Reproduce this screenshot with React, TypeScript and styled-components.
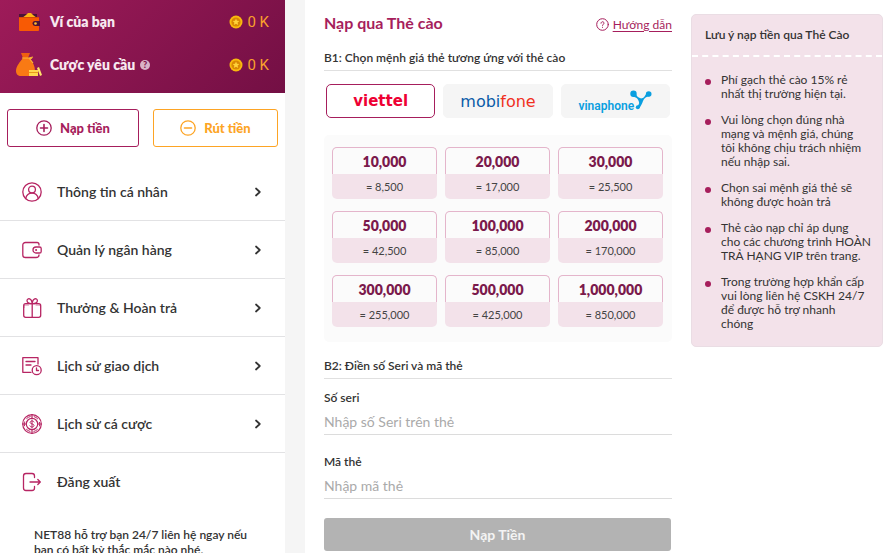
import React, { useState } from "react";
import styled, { createGlobalStyle, css } from "styled-components";

const GlobalStyle = createGlobalStyle`
  *, *::before, *::after { box-sizing: border-box; }
  body {
    margin: 0;
    background: #fff;
    color: #333;
    font-family: Lato, "Noto Sans", sans-serif;
    font-size: 14px;
  }
  button, input { font: inherit; color: inherit; }
  button { cursor: pointer; }
`;

const brand = "#a61e5c";

const Page = styled.div`
  display: grid;
  grid-template-columns: 285px minmax(0, 1fr);
  column-gap: 20px;
  height: 100vh;
  background: #f5f5f5;
`;

const pane = css`
  background: #fff;
  overflow-y: auto;
  scrollbar-width: none;
`;

const Sidebar = styled.aside`
  ${pane}
`;

const Balances = styled.section`
  display: grid;
  row-gap: 12px;
  padding: 6px 16px 13px;
  background: linear-gradient(135deg, #9e1b59, #730f44);
`;

const BalanceRow = styled.div`
  display: flex;
  align-items: center;
  height: 31px;
`;

const BalanceIcon = styled.span`
  display: flex;
  width: 34px;
`;

const BalanceName = styled.span`
  color: #f7e9f0;
  font-size: 14px;
  font-weight: 800;
`;

const HelpDot = styled.button`
  display: grid;
  place-items: center;
  width: 10px;
  height: 10px;
  margin-left: 5px;
  padding: 0;
  border: 0;
  border-radius: 50%;
  background: #d9b3c7;
  color: #7d1249;
  font-size: 9px;
  font-weight: 900;
  line-height: 10px;
`;

const Amount = styled.span`
  display: flex;
  align-items: center;
  gap: 4px;
  margin-left: auto;
  color: #f9a12c;
  font-family: Roboto, sans-serif;
  font-size: 15px;
`;

const Actions = styled.div`
  display: grid;
  grid-template-columns: 132fr 125fr;
  column-gap: 14px;
  padding: 16px 7px;
`;

const ActionButton = styled.button<{ $color: string }>`
  display: flex;
  align-items: center;
  justify-content: center;
  gap: 8px;
  height: 38px;
  padding: 0;
  border: 1px solid ${(p) => p.$color};
  border-radius: 3px;
  background: #fff;
  color: ${(p) => p.$color};
  font-size: 13px;
  font-weight: 900;
`;

const MenuList = styled.ul`
  margin: 0;
  padding: 0;
  list-style: none;
`;

const MenuItem = styled.li`
  border-bottom: 1px solid #e2e2e4;
  &:last-child { border-bottom: 0; }
`;

const MenuLink = styled.a`
  display: flex;
  align-items: center;
  height: 57px;
  padding: 0 24px 0 22px;
  color: #333;
  font-size: 14px;
  font-weight: 600;
  text-decoration: none;
`;

const MenuIcon = styled.span`
  display: flex;
  width: 35px;
  color: #b72563;
`;

const MenuChevron = styled.span`
  display: flex;
  margin-left: auto;
`;

const Support = styled.p`
  margin: 0;
  padding: 17px 34px;
  font-size: 12px;
  font-weight: 600;
  line-height: 15px;
`;

const Main = styled.main`
  ${pane}
  display: grid;
  grid-template-columns: minmax(0, 1fr) 192px;
  align-items: start;
  column-gap: 19px;
  padding: 14px 6px 2px 19px;
`;

const Deposit = styled.form`
  display: flex;
  flex-direction: column;
`;

const TitleRow = styled.header`
  display: flex;
  align-items: center;
  justify-content: space-between;
  height: 20px;
`;

const Title = styled.h1`
  margin: 0;
  color: ${brand};
  font-size: 16px;
  font-weight: 700;
  line-height: 18px;
  align-self: flex-start;
`;

const Guide = styled.a`
  display: flex;
  align-items: center;
  gap: 4px;
  color: ${brand};
  font-size: 12px;
  text-decoration: none;
  span { text-decoration: underline; text-underline-offset: 2px; }
`;

const Step = styled.h2`
  margin: 0;
  padding-bottom: 4px;
  border-bottom: 1px solid #e0e0e0;
  font-size: 12px;
  font-weight: 600;
  line-height: 16px;
`;

const StepOne = styled(Step)`
  margin-top: 16px;
`;

const Providers = styled.div`
  display: grid;
  grid-template-columns: repeat(3, 1fr);
  column-gap: 8px;
  padding: 13px 2px 17px;
`;

const Provider = styled.button<{ $active: boolean }>`
  display: flex;
  align-items: center;
  justify-content: center;
  height: 34px;
  padding: 0;
  border: 1px solid ${(p) => (p.$active ? brand : "#f5f5f5")};
  border-radius: 5px;
  background: ${(p) => (p.$active ? "#fff" : "#f5f5f5")};
`;

const Viettel = styled.span`
  color: #ee0033;
  font: 700 15px "DejaVu Sans", sans-serif;
`;

const Mobifone = styled.span`
  color: #0a5ca8;
  font: 400 16px "DejaVu Sans", sans-serif;
  em { color: #f0301f; font-style: normal; }
`;

const Vinaphone = styled.span`
  display: flex;
  align-items: flex-end;
  color: #0a9fe0;
  font: 600 12px Roboto, sans-serif;
  svg { margin: 0 0 3px -4px; }
`;

const CardGrid = styled.div`
  display: grid;
  grid-template-columns: repeat(3, 1fr);
  gap: 12px 8px;
  margin-bottom: 16px;
  padding: 12px 9px 15px 8px;
  border-radius: 5px;
  background: #fbfbfb;
`;

const Card = styled.button`
  display: flex;
  flex-direction: column;
  padding: 0;
  border: 0;
  border-radius: 5px;
  background: #f3e2ea;
  text-align: center;
`;

const CardValue = styled.span`
  width: 100%;
  height: 27px;
  border: 1px solid #e4b5cb;
  border-bottom: 0;
  border-radius: 5px 5px 0 0;
  background: #fbfbfb;
  color: #7b1a4c;
  font-size: 14px;
  font-weight: 800;
  line-height: 28px;
`;

const CardNet = styled.span`
  width: 100%;
  color: #444;
  font-size: 11px;
  line-height: 25px;
`;

const Field = styled.div`
  display: flex;
  flex-direction: column;
  margin-top: 11px;
  & + & { margin-top: 19px; }
`;

const Label = styled.label`
  font-size: 12px;
  font-weight: 600;
  line-height: 16px;
`;

const Input = styled.input`
  width: 100%;
  height: 29px;
  padding: 2px 0 0;
  border: 0;
  border-bottom: 1px solid #dcdcdc;
  background: transparent;
  font-size: 14px;
  outline: 0;
  &::placeholder { color: #aaa; opacity: 1; }
`;

const Submit = styled.button`
  height: 33px;
  margin: 19px 1px 0 0;
  border: 0;
  border-radius: 3px;
  background: #b3b3b3;
  color: #f4f4f4;
  font-size: 14px;
  font-weight: 700;
`;

const Notes = styled.section`
  border: 1px solid #eadde4;
  border-radius: 5px;
  background: #f3e2ea;
`;

const NotesTitle = styled.h2`
  margin: 0;
  padding: 0 13px;
  border-bottom: 2px dashed #fff;
  font-size: 12px;
  font-weight: 600;
  line-height: 40px;
`;

const NotesList = styled.ul`
  display: grid;
  row-gap: 12px;
  margin: 0;
  padding: 16px 10px 15px 29px;
  list-style: none;
  font-size: 12px;
  line-height: 14px;
`;

const Note = styled.li`
  position: relative;
  white-space: pre-line;
  &::before {
    content: "";
    position: absolute;
    top: 6px;
    left: -16px;
    width: 6px;
    height: 6px;
    border-radius: 50%;
    background: ${brand};
  }
`;

const line = {
  fill: "none",
  stroke: "currentColor",
  strokeWidth: 1.3,
  strokeLinecap: "round" as const,
  strokeLinejoin: "round" as const,
};

const WalletColor = () => (
  <svg width="26" height="20" viewBox="0 0 26 20" aria-hidden="true">
    <path d="M3 2h18v6H3z" fill="#4b1238" />
    <path d="M6 6l4-3 2-2h3l2 2 4 3z" fill="#fdb515" />
    <rect x="3" y="5" width="20" height="14" rx="1" fill="#f85a04" />
    <path d="M3 5h20v1H3z" fill="#d94b06" />
    <path d="M19 9h5v5h-5a2.5 2.5 0 0 1 0-5z" fill="#4b1238" />
    <circle cx="19.500" cy="11.500" r="1.300" fill="#fdc332" />
  </svg>
);

const MoneyBag = () => (
  <svg width="26" height="25" viewBox="0 0 26 25" aria-hidden="true">
    <path d="M5 1h9l-2 5H7z" fill="#ef5f10" />
    <path d="M7 6h6c4 4 6 8 6 13 0 4-2 5-5 5H5c-3 0-5-2-5-5C0 14 4 10 7 6z" fill="#f97a14" />
    <path d="M6 6h7l4-1M13 6l4 5M14 7l2-1" stroke="#fdb937" strokeWidth="1.200" fill="none" />
    <path d="M13 18h9v6h-9z" fill="#ffd84d" />
    <path d="M13 20.500h9" stroke="#e99b1a" />
    <path d="M21 16l2-1 3 8-2 1z" fill="#ffe36b" />
  </svg>
);

const Coin = () => (
  <svg width="14" height="14" viewBox="0 0 14 14" aria-hidden="true">
    <circle cx="7" cy="7" r="6.500" fill="#f9b90e" />
    <circle cx="7" cy="7" r="4.600" fill="#d98804" />
    <path d="M7 3.600l1 2.200 2.400.2-1.800 1.600.6 2.300L7 8.700 4.800 9.900l.6-2.300L3.600 6 6 5.800z" fill="#ffd23a" />
  </svg>
);

const SignCircle = ({ plus }: { plus?: boolean }) => (
  <svg width="16" height="16" viewBox="0 0 16 16" aria-hidden="true" {...line}>
    <circle cx="8" cy="8" r="7.200" />
    <path d={plus ? "M4.500 8h7M8 4.500v7" : "M4.500 8h7"} strokeWidth="1.600" />
  </svg>
);

const UserIcon = () => (
  <svg width="20" height="20" viewBox="0 0 20 20" aria-hidden="true" {...line}>
    <circle cx="10" cy="10" r="9.200" />
    <circle cx="10" cy="7.500" r="3.400" />
    <path d="M3.700 16.500c.7-3.200 3.200-5.300 6.300-5.300s5.600 2.100 6.300 5.300" />
  </svg>
);

const WalletIcon = () => (
  <svg width="20" height="20" viewBox="0 0 20 20" aria-hidden="true" {...line}>
    <path d="M17 5V4.500c0-1.200-.8-2-2-2H3.500c-1.600 0-2.700 1-2.700 2.600v9.800c0 1.600 1 2.600 2.700 2.600H14c1.800 0 3-.9 3-2.500" />
    <path d="M14 7h3.500c1 0 1.700.7 1.700 1.600v2.800c0 1-.7 1.600-1.700 1.600H14a3 3 0 0 1 0-6z" />
    <path d="M14 10h.2" strokeWidth="1.800" />
  </svg>
);

const GiftIcon = () => (
  <svg width="20" height="20" viewBox="0 0 20 20" aria-hidden="true" {...line}>
    <rect x="1.700" y="5.700" width="17" height="13.600" rx="2" />
    <path d="M10.200 5.700v13.600M10.200 5.500C8 6 5 5 5 2.800 5 1 6.500.5 7.700.9c1.500.5 2.300 2.500 2.500 4.600C10.400 3.400 11.200 1.400 12.700.9c1.200-.4 2.700.1 2.700 1.900 0 2.200-3 3.200-5.200 2.700z" />
    <path d="M2 9.500v-1c0-1 .5-1.500 1.500-1.500h3M18.500 9.500v-1c0-1-.5-1.500-1.500-1.500h-3" strokeWidth="0.600" />
  </svg>
);

const HistoryIcon = () => (
  <svg width="20" height="20" viewBox="0 0 20 20" aria-hidden="true" {...line}>
    <path d="M16 8V1.700H.8v14.600H9M4 5.500h9M4 9h5" />
    <circle cx="14.700" cy="14.200" r="4.500" />
    <path d="M14.500 12v2.500h2" />
  </svg>
);

const ChipIcon = () => (
  <svg width="20" height="20" viewBox="0 0 20 20" aria-hidden="true" {...line} strokeWidth="1.200">
    <circle cx="10" cy="10" r="9.300" />
    <circle cx="10" cy="10" r="5.700" />
    <circle cx="10" cy="10" r="7.700" strokeDasharray="4 4.060" strokeDashoffset="2" strokeWidth="1" />
    <path d="M10 .7v3M10 16.300v3M.7 10h3M16.300 10h3" />
    <path d="M12 8c-.4-.7-1-1-2-1s-1.900.5-1.900 1.400c0 2 3.900 1 3.900 3.100 0 1-.9 1.500-2 1.500s-1.800-.4-2.100-1.100M10 6v8" strokeWidth="1" />
  </svg>
);

const LogoutIcon = () => (
  <svg width="20" height="20" viewBox="0 0 20 20" aria-hidden="true" {...line}>
    <path d="M12.500 5.500V4c0-1.700-.8-2.500-2.500-2.500H4C2.300 1.500 1.500 2.300 1.500 4v12c0 1.700.8 2.500 2.500 2.500h6c1.700 0 2.500-.8 2.500-2.500v-1.500" />
    <path d="M8 10h10.200M15.800 7.500l2.500 2.500-2.500 2.500" />
  </svg>
);

const Chevron = () => (
  <svg width="6" height="10" viewBox="0 0 6 10" aria-hidden="true" {...line} strokeWidth="1.700">
    <path d="M1 1.500L4.800 5 1 8.500" />
  </svg>
);

const QuestionIcon = () => (
  <svg width="13" height="13" viewBox="0 0 13 13" aria-hidden="true" {...line} strokeWidth="1">
    <circle cx="6.500" cy="6.500" r="5.800" />
    <path d="M5 5.200c0-2 3-2 3 0 0 1.100-1.500 1-1.500 2.200M6.500 9.200v.2" />
  </svg>
);

const VinaMark = () => (
  <svg width="22" height="20" viewBox="0 0 22 20" aria-hidden="true" fill="#0a9fe0">
    <circle cx="3.500" cy="3.700" r="3.200" />
    <circle cx="18.700" cy="4" r="2.800" />
    <circle cx="7.800" cy="17.300" r="2" />
    <path d="M5.500 2.500c1 4 3 5 5.500 6 3 0 4-3 6-6l3.500 3.500c-4 .5-6.500 2-7.500 5-.7 2.500-2 4.500-3.500 7l-2.500-1.500c1.500-1.500 2.500-3 2-4.500C8.300 9 6.500 7 2.500 6.500z" />
  </svg>
);

const menu = [
  { label: "Thông tin cá nhân", icon: <UserIcon />, chevron: true },
  { label: "Quản lý ngân hàng", icon: <WalletIcon />, chevron: true },
  { label: "Thưởng & Hoàn trả", icon: <GiftIcon />, chevron: true },
  { label: "Lịch sử giao dịch", icon: <HistoryIcon />, chevron: true },
  { label: "Lịch sử cá cược", icon: <ChipIcon />, chevron: true },
  { label: "Đăng xuất", icon: <LogoutIcon />, chevron: false },
];

const providers = [
  { id: "viettel", logo: <Viettel>viettel</Viettel> },
  { id: "mobifone", logo: <Mobifone>mobi<em>fone</em></Mobifone> },
  { id: "vinaphone", logo: <Vinaphone>vinaphone<VinaMark /></Vinaphone> },
];

const cards = [
  ["10,000", "8,500"],
  ["20,000", "17,000"],
  ["30,000", "25,500"],
  ["50,000", "42,500"],
  ["100,000", "85,000"],
  ["200,000", "170,000"],
  ["300,000", "255,000"],
  ["500,000", "425,000"],
  ["1,000,000", "850,000"],
];

const notes = [
  "Phí gạch thẻ cào 15% rẻ\nnhất thị trường hiện tại.",
  "Vui lòng chọn đúng nhà\nmạng và mệnh giá, chúng\ntôi không chịu trách nhiệm\nnếu nhập sai.",
  "Chọn sai mệnh giá thẻ sẽ\nkhông được hoàn trả",
  "Thẻ cào nạp chỉ áp dụng\ncho các chương trình HOÀN\nTRẢ HẠNG VIP trên trang.",
  "Trong trường hợp khẩn cấp\nvui lòng liên hệ CSKH 24/7\nđể được hỗ trợ nhanh\nchóng",
];

export default function App() {
  const [provider, setProvider] = useState("viettel");

  return (
    <>
      <GlobalStyle />
      <Page>
        <Sidebar>
          <Balances>
            <BalanceRow>
              <BalanceIcon><WalletColor /></BalanceIcon>
              <BalanceName>Ví của bạn</BalanceName>
              <Amount><Coin />0 K</Amount>
            </BalanceRow>
            <BalanceRow>
              <BalanceIcon><MoneyBag /></BalanceIcon>
              <BalanceName>Cược yêu cầu</BalanceName>
              <HelpDot type="button">?</HelpDot>
              <Amount><Coin />0 K</Amount>
            </BalanceRow>
          </Balances>
          <Actions>
            <ActionButton type="button" $color={brand}><SignCircle plus />Nạp tiền</ActionButton>
            <ActionButton type="button" $color="#fda424"><SignCircle />Rút tiền</ActionButton>
          </Actions>
          <nav>
            <MenuList>
              {menu.map((m) => (
                <MenuItem key={m.label}>
                  <MenuLink href="#">
                    <MenuIcon>{m.icon}</MenuIcon>
                    {m.label}
                    {m.chevron && <MenuChevron><Chevron /></MenuChevron>}
                  </MenuLink>
                </MenuItem>
              ))}
            </MenuList>
          </nav>
          <Support>NET88 hỗ trợ bạn 24/7 liên hệ ngay nếu bạn có bất kỳ thắc mắc nào nhé.</Support>
        </Sidebar>

        <Main>
          <Deposit onSubmit={(e) => e.preventDefault()}>
            <TitleRow>
              <Title>Nạp qua Thẻ cào</Title>
              <Guide href="#"><QuestionIcon /><span>Hướng dẫn</span></Guide>
            </TitleRow>
            <StepOne>B1: Chọn mệnh giá thẻ tương ứng với thẻ cào</StepOne>
            <Providers>
              {providers.map((p) => (
                <Provider
                  key={p.id}
                  type="button"
                  $active={p.id === provider}
                  aria-pressed={p.id === provider}
                  onClick={() => setProvider(p.id)}
                >
                  {p.logo}
                </Provider>
              ))}
            </Providers>
            <CardGrid>
              {cards.map(([value, net]) => (
                <Card key={value} type="button">
                  <CardValue>{value}</CardValue>
                  <CardNet>= {net}</CardNet>
                </Card>
              ))}
            </CardGrid>
            <Step>B2: Điền số Seri và mã thẻ</Step>
            <Field>
              <Label htmlFor="seri">Số seri</Label>
              <Input id="seri" placeholder="Nhập số Seri trên thẻ" />
            </Field>
            <Field>
              <Label htmlFor="code">Mã thẻ</Label>
              <Input id="code" placeholder="Nhập mã thẻ" />
            </Field>
            <Submit type="submit">Nạp Tiền</Submit>
          </Deposit>
          <Notes>
            <NotesTitle>Lưu ý nạp tiền qua Thẻ Cào</NotesTitle>
            <NotesList>
              {notes.map((n) => <Note key={n}>{n}</Note>)}
            </NotesList>
          </Notes>
        </Main>
      </Page>
    </>
  );
}
